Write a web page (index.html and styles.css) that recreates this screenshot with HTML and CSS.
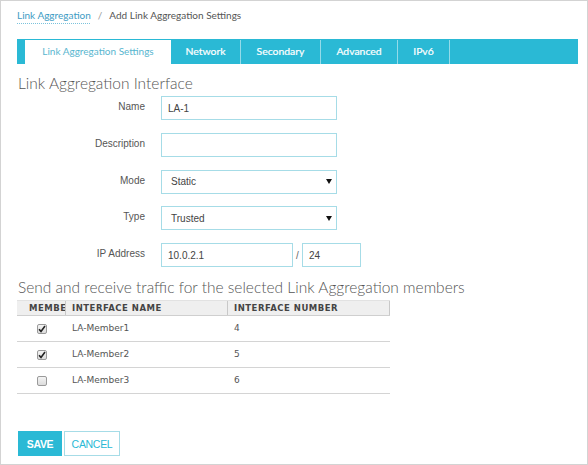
FILE: index.html
```html
<!DOCTYPE html>
<html>
<head>
<meta charset="utf-8">
<link rel="stylesheet" href="styles.css">
</head>
<body>
<div class="frame">
  <div class="breadcrumb">
    <a class="crumb-link">Link Aggregation</a>
    <span class="crumb-sep">/</span>
    <span class="crumb-current">Add Link Aggregation Settings</span>
  </div>

  <div class="tabs">
    <div class="tab active">Link Aggregation Settings</div>
    <div class="tab tab-network">Network</div>
    <div class="tab tab-secondary">Secondary</div>
    <div class="tab tab-advanced">Advanced</div>
    <div class="tab tab-ipv6">IPv6</div>
  </div>

  <h2 class="section-title">Link Aggregation Interface</h2>

  <div class="form">
    <div class="row">
      <label class="label">Name</label>
      <input class="field" type="text" value="LA-1">
    </div>
    <div class="row">
      <label class="label">Description</label>
      <input class="field" type="text" value="">
    </div>
    <div class="row">
      <label class="label">Mode</label>
      <div class="field select"><span>Static</span><svg class="arrow" width="6" height="5" viewBox="0 0 6 5"><path d="M0 0H6L3 5Z" fill="#111"/></svg></div>
    </div>
    <div class="row">
      <label class="label">Type</label>
      <div class="field select"><span>Trusted</span><svg class="arrow" width="6" height="5" viewBox="0 0 6 5"><path d="M0 0H6L3 5Z" fill="#111"/></svg></div>
    </div>
    <div class="row">
      <label class="label">IP Address</label>
      <input class="field ip" type="text" value="10.0.2.1">
      <span class="slash">/</span>
      <input class="field mask" type="text" value="24">
    </div>
  </div>

  <h2 class="section-title second">Send and receive traffic for the selected Link Aggregation members</h2>

  <div class="members">
    <div class="mrow head">
      <div class="hcell first"><span class="clip">MEMBER</span></div>
      <div class="hcell">INTERFACE NAME</div>
      <div class="hcell">INTERFACE NUMBER</div>
    </div>
    <div class="mrow">
      <div class="cell cb-cell"><span class="cb"><svg class="tick" width="8" height="8" viewBox="0 0 8 8"><path d="M1 4.2L3 6.4L7 1" fill="none" stroke="#222" stroke-width="1.6"/></svg></span></div>
      <div class="cell">LA-Member1</div>
      <div class="cell">4</div>
    </div>
    <div class="mrow">
      <div class="cell cb-cell"><span class="cb"><svg class="tick" width="8" height="8" viewBox="0 0 8 8"><path d="M1 4.2L3 6.4L7 1" fill="none" stroke="#222" stroke-width="1.6"/></svg></span></div>
      <div class="cell">LA-Member2</div>
      <div class="cell">5</div>
    </div>
    <div class="mrow">
      <div class="cell cb-cell"><span class="cb"></span></div>
      <div class="cell">LA-Member3</div>
      <div class="cell">6</div>
    </div>
  </div>

  <div class="actions">
    <button class="btn btn-save">SAVE</button>
    <button class="btn btn-cancel">CANCEL</button>
  </div>
</div>
</body>
</html>
```

FILE: styles.css
```css
html, body {
  margin: 0;
  padding: 0;
  background: #fff;
}

.frame {
  box-sizing: border-box;
  width: 588px;
  height: 465px;
  border: 1px solid #d3d3d3;
  padding: 0 9px 0 16px;
  font-family: Lato, "Liberation Sans", sans-serif;
  color: #555;
}

.breadcrumb {
  display: flex;
  align-items: center;
  gap: 6px;
  height: 14px;
  margin-top: 7px;
  font-size: 10px;
  line-height: 14px;
}

.crumb-link {
  color: #3d9cc4;
  text-decoration: underline dotted #7cc3dc;
  text-underline-offset: 4px;
}

.crumb-sep {
  color: #999;
  padding: 0 1px;
}

.crumb-current {
  color: #555;
}

.tabs {
  display: flex;
  margin-top: 17px;
  height: 25px;
  box-sizing: border-box;
  border-top: 1px solid #2ab9d5;
  background: #2ab9d5;
  padding-left: 8px;
}

.tab {
  box-sizing: border-box;
  height: 24px;
  line-height: 23px;
  text-align: center;
  font-size: 10.4px;
  font-weight: 400;
  color: #fff;
  -webkit-text-stroke: 0.2px #fff;
  border-right: 1px solid #94dbe9;
}

.tab.active {
  width: 146px;
  background: #fff;
  color: #58b6cf;
  font-size: 10px;
  -webkit-text-stroke: 0;
  border-right: none;
}

.tab-network { width: 70px; }
.tab-secondary { width: 80px; }
.tab-advanced { width: 77px; }
.tab-ipv6 { width: 52px; }

.section-title {
  margin: 9px 0 0 1px;
  font-size: 15.5px;
  font-weight: 300;
  line-height: 20px;
  color: #555;
}

.section-title.second {
  margin-top: 10px;
}

.form {
  display: flex;
  flex-direction: column;
  gap: 12.75px;
  margin-top: 3px;
}

.row {
  display: flex;
  align-items: center;
  height: 24px;
}

.label {
  width: 128px;
  text-align: right;
  padding-right: 16px;
  padding-bottom: 3px;
  font-family: "Liberation Sans", Arial, sans-serif;
  font-size: 10px;
  color: #555;
}

.field {
  box-sizing: border-box;
  width: 176px;
  height: 24px;
  margin: 0;
  border: 1px solid #a6dce7;
  border-radius: 0;
  padding: 0 6px;
  font-family: "Liberation Sans", Arial, sans-serif;
  font-size: 10px;
  color: #444;
  background: #fff;
  outline: none;
}

.select {
  display: flex;
  align-items: center;
  justify-content: space-between;
  padding: 0 4px 0 9px;
}

.arrow {
  display: block;
}

.field.ip {
  width: 132px;
}

.slash {
  width: 9px;
  text-align: center;
  font-family: "Liberation Sans", Arial, sans-serif;
  font-size: 10px;
  color: #666;
}

.field.mask {
  width: 59px;
}

.members {
  margin-top: 3px;
  width: 373px;
  font-family: "DejaVu Sans", Verdana, sans-serif;
  font-size: 9px;
}

.mrow {
  display: grid;
  grid-template-columns: 49px 162px 162px;
  height: 26px;
  box-sizing: border-box;
  border-bottom: 1px solid #d4d4d4;
}

.mrow.head {
  height: 16px;
  background: #efefef;
  border-top: 1px solid #e2e2e2;
  border-bottom: 1px solid #cfcfcf;
}

.hcell {
  display: flex;
  align-items: center;
  padding-left: 6px;
  border-right: 1px solid #c8c8c8;
  font-weight: 700;
  font-size: 8.5px;
  letter-spacing: 0.5px;
  color: #444;
  white-space: nowrap;
  overflow: hidden;
}

.hcell.first {
  padding-left: 12px;
}

.clip {
  display: block;
  overflow: hidden;
}

.cell {
  display: flex;
  align-items: center;
  padding: 0 0 1px 6px;
  color: #555;
}

.cell.cb-cell {
  padding: 1px 0 0 20px;
}

.cb {
  box-sizing: border-box;
  display: flex;
  align-items: center;
  justify-content: center;
  width: 10px;
  height: 10px;
  border: 1px solid #9a9a9a;
  border-radius: 2px;
  background: linear-gradient(#f4f4f4, #dcdcdc);
}

.tick {
  display: block;
  flex: none;
}

.actions {
  display: flex;
  gap: 2px;
  margin-top: 37px;
  margin-left: 1px;
}

.btn {
  box-sizing: border-box;
  height: 25px;
  padding: 0;
  border: 1px solid #2ab9d5;
  border-radius: 0;
  font-family: "Liberation Sans Narrow", "Liberation Sans", Arial, sans-serif;
  font-size: 10.5px;
  font-weight: 700;
  letter-spacing: -0.3px;
}

.btn-save {
  width: 44px;
  background: #2ab9d5;
  color: #fff;
}

.btn-cancel {
  width: 56px;
  background: #fff;
  color: #2ab9d5;
  border-color: #a6dce7;
  font-weight: 400;
}
```
